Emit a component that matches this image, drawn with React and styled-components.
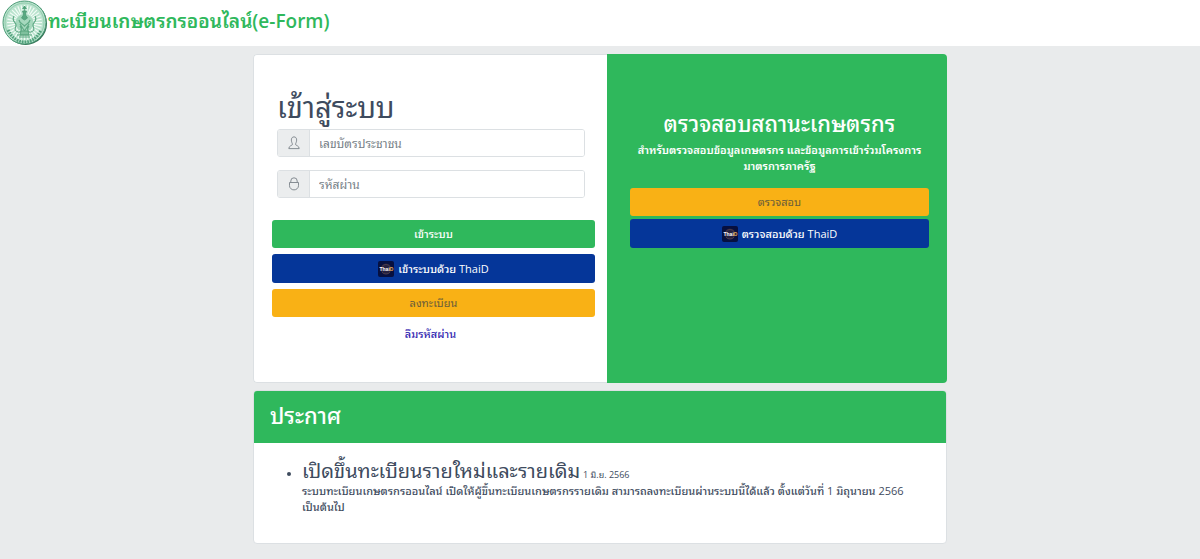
import React from 'react'
import styled, { createGlobalStyle } from 'styled-components'

const GlobalStyle = createGlobalStyle`
  * {
    box-sizing: border-box;
  }
  body {
    margin: 0;
    background: #e9ebec;
    color: #3e4b5e;
    font-family: 'Open Sans', 'Noto Sans', 'Noto Sans Thai Looped', 'Leelawadee UI', Tahoma, Loma, Waree, Garuda, sans-serif;
    font-size: 11px;
    line-height: 16px;
  }
  h1, h2, h3, p, ul {
    margin: 0;
    padding: 0;
    font-weight: 400;
  }
`;
const Header = styled.header`
  display: flex;
  align-items: center;
  height: 46px;
  padding-left: 2px;
  background: #fff;
`;
const HeaderTitle = styled.h1`
  padding-bottom: 4px;
  color: #2fb85c;
  font-size: 19px;
  font-weight: 600;
  line-height: 24px;
`;
const Container = styled.main`
  display: flex;
  flex-flow: column;
  gap: 7px;
  max-width: 694px;
  margin: 0 auto;
  padding: 8px 0;
`;
const CardGroup = styled.div`
  display: flex;
  border-radius: 4px;
  overflow: hidden;
`;
const LoginCard = styled.section`
  width: 51%;
  padding: 34px 12px 40px 18px;
  background: #fff;
  border: 1px solid #dce0e3;
  border-right: 0;
  border-radius: 4px 0 0 4px;
`;
const LoginTitle = styled.h2`
  padding: 0 5px 4px;
  font-size: 29px;
  line-height: 36px;
`;
const Fields = styled.div`
  display: flex;
  flex-flow: column;
  gap: 13px;
  padding: 0 10px 0 5px;
  margin-bottom: 22px;
`;
const InputGroup = styled.div`
  display: flex;
  height: 28px;
  border: 1px solid #dce0e3;
  border-radius: 3px;
  overflow: hidden;
  &:focus-within {
    border-color: #2fb85c;
  }
  & > label {
    display: flex;
    align-items: center;
    justify-content: center;
    width: 32px;
    background: #ebedee;
    border-right: 1px solid #dce0e3;
  }
  & > input {
    flex: 1;
    min-width: 0;
    padding: 2px 9px 0;
    border: 0;
    outline: 0;
    background: #fff;
    color: #3e4b5e;
    font: inherit;
    font-size: 12px;
    &::placeholder {
      color: #777f87;
      opacity: 1;
    }
  }
`;
const Buttons = styled.div`
  display: flex;
  flex-flow: column;
  gap: ${props => props.$gap};
`;
const colors = {
  success: { background: '#2fb85c', text: '#fff' },
  primary: { background: '#053699', text: '#fff' },
  warning: { background: '#f9b115', text: '#6a5d3a' },
};
const Button = styled.button`
  display: flex;
  align-items: center;
  justify-content: center;
  gap: 4px;
  width: 100%;
  height: ${props => (props.$color === 'primary' ? '29px' : '28px')};
  padding: 0;
  border: 0;
  border-radius: 3px;
  background: ${props => colors[props.$color].background};
  color: ${props => colors[props.$color].text};
  font: inherit;
  font-weight: ${props => (props.$color === 'warning' ? 400 : 500)};
  cursor: pointer;
`;
const ForgotLink = styled.a`
  display: block;
  margin: 9px 6px 0 0;
  color: #321fb0;
  font-weight: 500;
  text-align: center;
  text-decoration: none;
`;
const StatusCard = styled.section`
  width: 49%;
  padding: 56px 18px 24px 23px;
  background: #2fb85c;
  color: #fff;
  text-align: center;
`;
const StatusTitle = styled.h2`
  margin-bottom: 6px;
  font-size: 22px;
  font-weight: 500;
  line-height: 26px;
`;
const StatusText = styled.p`
  margin-bottom: 14px;
  font-weight: 600;
`;
const NewsCard = styled.section`
  background: #fff;
  border: 1px solid #dce0e3;
  border-radius: 4px;
  overflow: hidden;
`;
const NewsHeader = styled.h2`
  padding: 10px 16px 14px;
  background: #2fb85c;
  color: #fff;
  font-size: 22px;
  font-weight: 500;
  line-height: 28px;
`;
const NewsList = styled.ul`
  padding: 16px 34px 28px 48px;
`;
const NewsTitle = styled.h3`
  display: inline;
  font-size: 20px;
  line-height: 24px;
`;
const NewsDate = styled.small`
  font-size: 9px;
`;
const NewsText = styled.p`
  font-weight: 500;
`;

function Seal() {
  const rays = Array.from({ length: 32 }, (_, i) => i * 11.25);
  return (
    <svg width="46" height="46" viewBox="0 0 46 46" fill="none" aria-hidden="true">
      <circle cx="23.5" cy="23.5" r="21.5" fill="#2f6f52" />
      <circle cx="22.5" cy="22.5" r="21.5" fill="#b9e3cd" stroke="#4a9a75" />
      <circle cx="22.5" cy="22.5" r="19.5" stroke="#78bb99" strokeWidth=".6" />
      {rays.map(angle => (
        <path key={angle} d="M22.5 14V5" stroke="#f2fbf6" strokeWidth="1.2" transform={`rotate(${angle} 22.5 22.5)`} />
      ))}
      <path d="M6 30c4 8 10 12 16.500 12S35 38 39 30" stroke="#4f9f7a" strokeWidth="3" strokeDasharray="1.500 1.200" />
      <circle cx="22.500" cy="23" r="9" fill="#a5d8bd" />
      <path d="M22.500 6v5m-2-2 2-3 2 3m-4 2h4l-1 4 2 3-3 2-3-2 2-3z" fill="#5aa881" stroke="#4b9c75" strokeWidth=".8" />
      <path d="M12 16c-3 5 2 6 2 9s-3 5 2 7c4 1 4-4 2-6m15-10c3 5-2 6-2 9s3 5-2 7c-4 1-4-4-2-6M17 20c1 4 3 3 5.500 6 2.500-3 4.500-2 5.500-6M18 24l4.500 7 4.500-7" stroke="#5faa85" strokeWidth="1.200" />
      <path d="M19 31h7l1 4h-9zM15 35h15M17 37h11" fill="#7fc09d" stroke="#5aa57f" />
    </svg>
  );
}

function UserIcon() {
  return (
    <svg width="12" height="14" viewBox="0 0 12 14" fill="none" stroke="#7b8289" strokeWidth=".9" aria-hidden="true">
      <path d="M4.300 7.600C2.800 4.500 3 .9 6 .9s3.200 3.600 1.700 6.700v1.200c.2.700 3.500 1 3.500 3.800H.8c0-2.800 3.300-3.100 3.500-3.800z" />
    </svg>
  );
}

function LockIcon() {
  return (
    <svg width="12" height="14" viewBox="0 0 12 14" fill="none" stroke="#7b8289" strokeWidth=".9" aria-hidden="true">
      <path d="M2.800 5.500V4a3.200 3.200 0 0 1 6.400 0v1.500M1.500 5.500h9v3.200a4.500 4.200 0 0 1-9 0z" />
    </svg>
  );
}

function ThaiDIcon() {
  return (
    <svg width="16" height="16" viewBox="0 0 16 16" aria-hidden="true">
      <rect width="16" height="16" rx="2" fill="#07103f" />
      <circle cx="8" cy="8" r="5.500" fill="#25213f" />
      <path d="M4 5.500a5 5 0 0 1 8 0M4 11a5 5 0 0 0 8 0" fill="none" stroke="#665055" strokeWidth=".6" />
      <text x="1.500" y="10" fill="#fff" fontFamily="Liberation Sans, sans-serif" fontSize="5" fontWeight="700">
        Thai<tspan fill="#e6a557">D</tspan>
      </text>
    </svg>
  );
}

function App() {
  return (
    <>
      <GlobalStyle />
      <Header>
        <Seal />
        <HeaderTitle>ทะเบียนเกษตรกรออนไลน์(e-Form)</HeaderTitle>
      </Header>
      <Container>
        <CardGroup>
          <LoginCard>
            <form onSubmit={e => e.preventDefault()}>
              <LoginTitle>เข้าสู่ระบบ</LoginTitle>
              <Fields>
                <InputGroup>
                  <label htmlFor="citizenId"><UserIcon /></label>
                  <input id="citizenId" type="text" placeholder="เลขบัตรประชาชน" />
                </InputGroup>
                <InputGroup>
                  <label htmlFor="password"><LockIcon /></label>
                  <input id="password" type="password" placeholder="รหัสผ่าน" />
                </InputGroup>
              </Fields>
              <Buttons $gap="6px">
                <Button type="submit" $color="success">เข้าระบบ</Button>
                <Button type="button" $color="primary"><ThaiDIcon />เข้าระบบด้วย ThaiD</Button>
                <Button type="button" $color="warning">ลงทะเบียน</Button>
              </Buttons>
              <ForgotLink href="#forgot">ลืมรหัสผ่าน</ForgotLink>
            </form>
          </LoginCard>
          <StatusCard>
            <StatusTitle>ตรวจสอบสถานะเกษตรกร</StatusTitle>
            <StatusText>สำหรับตรวจสอบข้อมูลเกษตรกร และข้อมูลการเข้าร่วมโครงการมาตรการภาครัฐ</StatusText>
            <Buttons $gap="3px">
              <Button type="button" $color="warning">ตรวจสอบ</Button>
              <Button type="button" $color="primary"><ThaiDIcon />ตรวจสอบด้วย ThaiD</Button>
            </Buttons>
          </StatusCard>
        </CardGroup>
        <NewsCard>
          <NewsHeader>ประกาศ</NewsHeader>
          <NewsList>
            <li>
              <NewsTitle>เปิดขึ้นทะเบียนรายใหม่และรายเดิม</NewsTitle> <NewsDate>1 มิ.ย. 2566</NewsDate>
              <NewsText>ระบบทะเบียนเกษตรกรออนไลน์ เปิดให้ผู้ขึ้นทะเบียนเกษตรกรรายเดิม สามารถลงทะเบียนผ่านระบบนี้ได้แล้ว ตั้งแต่วันที่ 1 มิถุนายน 2566 เป็นต้นไป</NewsText>
            </li>
          </NewsList>
        </NewsCard>
      </Container>
    </>
  )
}

export default App
